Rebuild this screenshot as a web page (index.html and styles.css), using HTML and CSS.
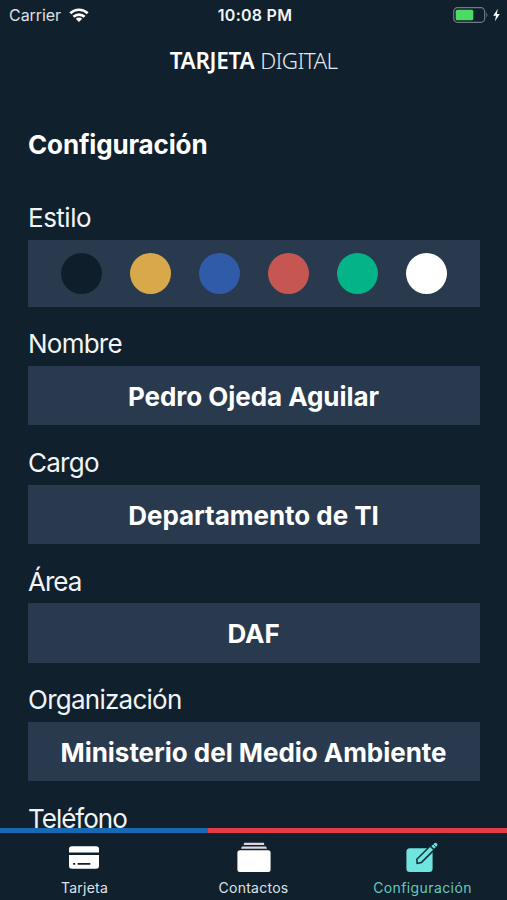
FILE: index.html
```html
<!DOCTYPE html>
<html lang="es">
<head>
<meta charset="utf-8">
<title>Tarjeta Digital</title>
<link rel="stylesheet" href="styles.css">
</head>
<body>
<div class="app">
  <header class="status">
    <div class="carrier"><span>Carrier</span>
      <svg class="wifi" width="20" height="15" viewBox="0 0 20 15" fill="none" stroke="#fff" stroke-width="2.7"><path d="M1.3 5.2C6.2.6 13.8.6 18.7 5.2M4.4 8.7C7.6 5.8 12.4 5.8 15.6 8.7"/><path d="M10 14 6.8 10.8Q10 8.2 13.2 10.8Z" fill="#fff" stroke="none"/></svg>
    </div>
    <time class="clock">10:08 PM</time>
    <div class="power">
      <svg width="49" height="18" viewBox="0 0 49 18"><rect x=".7" y="1.7" width="31" height="14.6" rx="3.8" fill="none" stroke="#707b83" stroke-width="1.2"/><path d="M33.4 6.5Q35.4 9 33.4 11.5Z" fill="#707b83"/><rect x="2.7" y="3.7" width="17.6" height="10.6" rx="1.6" fill="#4cdb64"/><path d="M44.8 2.7 40.2 9.8H43L41.9 15.3 46.8 8.1H43.9Z" fill="#fff"/></svg>
    </div>
  </header>
  <div class="brand"><b>TARJETA</b><span>DIGITAL</span></div>
  <main class="content">
    <h1>Configuración</h1>
    <section class="field"><h2 class="l-estilo">Estilo</h2>
      <div class="swatches"><i class="dot navy"></i><i class="dot gold"></i><i class="dot blue"></i><i class="dot red"></i><i class="dot green"></i><i class="dot white"></i></div>
    </section>
    <section class="field"><h2>Nombre</h2><div class="value">Pedro Ojeda Aguilar</div></section>
    <section class="field"><h2>Cargo</h2><div class="value">Departamento de TI</div></section>
    <section class="field"><h2 class="l-area">Área</h2><div class="value">DAF</div></section>
    <section class="field"><h2>Organización</h2><div class="value">Ministerio del Medio Ambiente</div></section>
    <section class="field"><h2 class="l-tel">Teléfono</h2></section>
  </main>
  <div class="stripe"></div>
  <nav class="tabs">
    <div class="tab">
      <svg width="34" height="32" viewBox="0 0 34 32"><path d="M3.8 5.3H28.2Q31 5.3 31 8.1V11.6H1V8.1Q1 5.3 3.8 5.3ZM1 14.1H31V25Q31 27.8 28.2 27.8H3.8Q1 27.8 1 25Z" fill="#fff"/><path d="M5.1 22.9H7.1M9.7 22.9H22.3" stroke="#10202c" stroke-width="1.6"/></svg>
      <span>Tarjeta</span>
    </div>
    <div class="tab">
      <svg width="34" height="32" viewBox="0 0 34 32" fill="#fff"><path d="M7.2 1.8H26.8L27.4 3.9H6.6ZM4.9 5.4H29.1L30 7.7H4Z" fill="#ded9df"/><rect x=".4" y="9.2" width="33.2" height="21.8" rx="2.5"/></svg>
      <span>Contactos</span>
    </div>
    <div class="tab active">
      <svg width="34" height="32" viewBox="0 0 34 32"><rect x=".4" y="7.2" width="26.2" height="23.8" rx="3.5" fill="#70e5e0"/><path d="M11.1 22.4 10.8 18.3 24.2 5 28.1 8.9 15.3 21.6Z" fill="#70e5e0" stroke="#10303b" stroke-width="1.5" stroke-linejoin="round"/><path d="M25.4 5.1 28.4 2.2Q29.6 1.2 30.9 2.6 32 3.8 31 4.9L28 7.8Z" fill="#70e5e0"/><path d="M27.3 3.3 30 6.1" stroke="#10303b" stroke-width=".8"/></svg>
      <span>Configuración</span>
    </div>
  </nav>
</div>
</body>
</html>
```

FILE: styles.css
```css
* { box-sizing: border-box; }
body { margin: 0; background: #10202c; }
.app {
  width: 507px; height: 900px; overflow: hidden;
  display: flex; flex-direction: column;
  background: #10202c; color: #fff;
  font-family: Inter, "Liberation Sans", sans-serif;
}
.status { height: 30px; flex: none; padding: 0 5px 0 9px; display: grid; grid-template-columns: 1fr auto 1fr; align-items: center; font-size: 16px; }
.carrier { display: flex; align-items: center; gap: 8px; color: #dce1e6; letter-spacing: -.05px; }
.clock { margin-left: -1px; font-weight: 600; color: #f2f5f8; letter-spacing: .25px; }
.power { display: flex; justify-content: flex-end; }
.brand { height: 61px; flex: none; display: flex; justify-content: center; gap: 6px; font: 22.5px/61px "Noto Sans", sans-serif; }
.brand b { font-weight: 600; letter-spacing: -.3px; }
.brand span { font-weight: 300; color: #e2e8ec; letter-spacing: -.7px; }
.content { flex: 1; min-height: 0; overflow: hidden; padding: 0 27px 0 28px; }
h1 { margin: 35px 0 36px; font-size: 26px; line-height: 38px; letter-spacing: -.15px; }
h2 { margin: 0; padding: 0 0 3.5px; font-size: 26px; font-weight: 400; line-height: 36px; color: #f1f4f7; letter-spacing: -.75px; }
.l-estilo { letter-spacing: -.5px; }
.l-area, .l-tel { letter-spacing: -1px; }
.field { margin-bottom: 19.9px; }
.value { height: 59.3px; background: #293a4e; text-align: center; font-size: 26px; font-weight: 700; line-height: 61px; letter-spacing: -.04px; padding-right: 1px; }
.swatches { height: 67px; background: #293a4e; display: flex; align-items: center; justify-content: space-between; padding: 0 33px; }
.dot { width: 41px; height: 41px; border-radius: 50%; }
.navy { background: #0e1f2b; }
.gold { background: #d8a94a; }
.blue { background: #305ba8; }
.red { background: #c65652; }
.green { background: #04b387; }
.white { background: #fff; }
.stripe { height: 5px; flex: none; background: linear-gradient(90deg, #1769b3 208px, #e53b49 208px); }
.tabs { height: 67px; flex: none; display: grid; grid-template-columns: repeat(3, 1fr); padding-top: 8px; }
.tab { display: flex; flex-direction: column; align-items: center; gap: 5px; font-size: 14px; line-height: 20px; color: #dce3e8; letter-spacing: .25px; }
.active { color: #65c9be; letter-spacing: .4px; }
```
